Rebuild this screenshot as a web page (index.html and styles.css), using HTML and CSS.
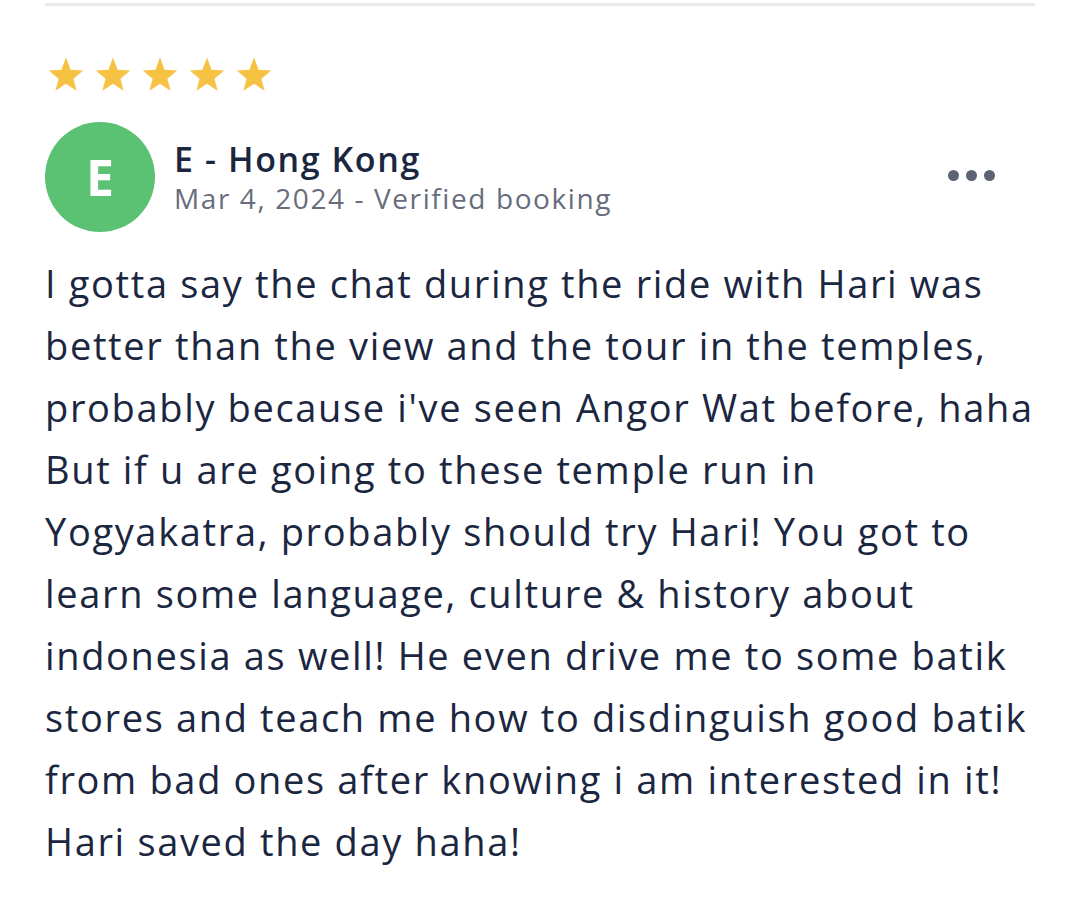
FILE: index.html
```html
<!DOCTYPE html>
<html lang="en">
<head>
<meta charset="utf-8">
<link rel="stylesheet" href="styles.css">
</head>
<body>
<div class="review">
  <div class="divider"></div>
  <div class="stars">
    <svg class="star" viewBox="0 0 24 24"><path d="M12 1l2.9 7.7 7.9.5-6.1 5.1 2 7.7L12 17.6l-6.7 4.4 2-7.7-6.1-5.1 7.9-.5z"/></svg>
    <svg class="star" viewBox="0 0 24 24"><path d="M12 1l2.9 7.7 7.9.5-6.1 5.1 2 7.7L12 17.6l-6.7 4.4 2-7.7-6.1-5.1 7.9-.5z"/></svg>
    <svg class="star" viewBox="0 0 24 24"><path d="M12 1l2.9 7.7 7.9.5-6.1 5.1 2 7.7L12 17.6l-6.7 4.4 2-7.7-6.1-5.1 7.9-.5z"/></svg>
    <svg class="star" viewBox="0 0 24 24"><path d="M12 1l2.9 7.7 7.9.5-6.1 5.1 2 7.7L12 17.6l-6.7 4.4 2-7.7-6.1-5.1 7.9-.5z"/></svg>
    <svg class="star" viewBox="0 0 24 24"><path d="M12 1l2.9 7.7 7.9.5-6.1 5.1 2 7.7L12 17.6l-6.7 4.4 2-7.7-6.1-5.1 7.9-.5z"/></svg>
  </div>
  <div class="author">
    <div class="avatar">E</div>
    <div class="meta">
      <div class="name">E - Hong Kong</div>
      <div class="date">Mar 4, 2024 - Verified booking</div>
    </div>
    <div class="more"><span></span><span></span><span></span></div>
  </div>
  <p class="text">I gotta say the chat during the ride with Hari was<br>better than the view and the tour in the temples,<br>probably because i've seen Angor Wat before, haha<br>But if u are going to these temple run in<br>Yogyakatra, probably should try Hari! You got to<br>learn some language, culture &amp; history about<br>indonesia as well! He even drive me to some batik<br>stores and teach me how to disdinguish good batik<br>from bad ones after knowing i am interested in it!<br>Hari saved the day haha!</p>
</div>
</body>
</html>
```
FILE: styles.css
```css
html, body {
  margin: 0;
  padding: 0;
  background: #ffffff;
}
body {
  font-family: "Open Sans", "Lato", sans-serif;
  color: #1b2640;
}
.review {
  padding: 3px 45px 0 45px;
}
.divider {
  height: 3px;
  background: #e9e9ec;
}
.stars {
  display: flex;
  gap: 9px;
  margin-top: 50px;
  padding-left: 2px;
}
.star {
  width: 38px;
  height: 38px;
  fill: #f6c243;
}
.author {
  display: flex;
  align-items: center;
  margin-top: 28px;
}
.avatar {
  width: 110px;
  height: 110px;
  border-radius: 50%;
  background: #5cc273;
  color: #fff;
  font-weight: 700;
  font-size: 50px;
  display: flex;
  align-items: center;
  justify-content: center;
  flex: none;
}
.meta {
  margin-left: 19px;
  flex: 1;
  padding-top: 0;
}
.name {
  font-size: 34px;
  font-weight: 600;
  line-height: 42px;
  letter-spacing: 1.6px;
  color: #1b2640;
}
.date {
  font-size: 28px;
  line-height: 36px;
  letter-spacing: 1.6px;
  color: #686c7c;
}
.more {
  display: flex;
  gap: 7px;
  margin-right: 40px;
  margin-top: -4px;
}
.more span {
  width: 11px;
  height: 11px;
  border-radius: 50%;
  background: #5d6275;
}
.text {
  margin: 20px 0 0 0;
  font-size: 38px;
  line-height: 62px;
  letter-spacing: 1.65px;
  white-space: nowrap;
}
```
